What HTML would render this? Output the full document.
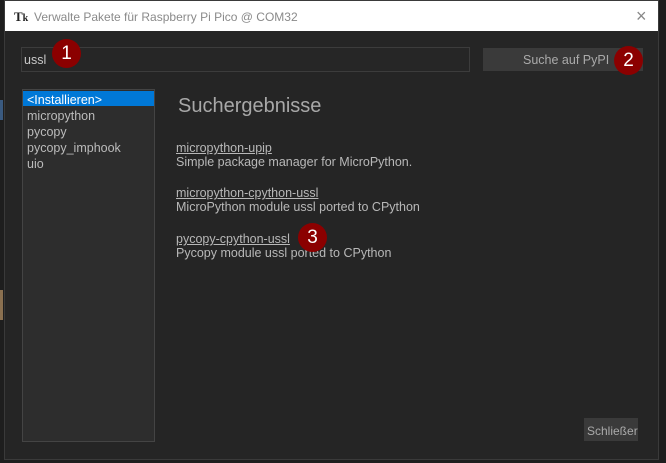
<!DOCTYPE html>
<html><head><meta charset="utf-8"><style>
*{margin:0;padding:0;box-sizing:border-box}
body{width:666px;height:463px;overflow:hidden;background:#1e1e1e;font-family:"Liberation Sans",sans-serif;position:relative}
.a{position:absolute}
#win{left:4px;top:0;width:655px;height:460px;background:#252525;border:1px solid #3a3a3a}
#title{left:5px;top:1px;width:653px;height:30px;background:#fff;color:#8a8a8a;font-size:12px}
.c{width:29px;height:29px;border-radius:50%;background:#8b0000;color:#fff;font-size:19px;text-align:center;line-height:29px}
.t{color:#b8b8b8;font-size:12.5px;white-space:nowrap}
.u{text-decoration:underline}
</style></head><body>
<div class="a" style="left:0;top:100px;width:3px;height:20px;background:#3a5a80"></div>
<div class="a" style="left:0;top:290px;width:3px;height:30px;background:#8a7050"></div>
<div class="a" id="win"></div>
<div class="a" id="title">
 <div class="a" style="left:9px;top:8px;font-weight:bold;font-size:13px;color:#222;font-family:'Liberation Serif',serif">T<span style="font-size:10px">k</span></div>
 <div class="a" style="left:29px;top:9px">Verwalte Pakete für Raspberry Pi Pico @ COM32</div>
 <div class="a" style="left:631px;top:5px;font-size:18px;color:#888">×</div>
</div>
<div class="a" style="left:21px;top:47px;width:449px;height:25px;border:1px solid #3c3c3c;background:#262626"></div>
<div class="a t" style="left:24px;top:53px;color:#c8c8c8;font-size:12.5px">ussl</div>
<div class="a" style="left:483px;top:48px;width:160px;height:23px;background:#3a3a3a"></div>
<div class="a t" style="left:523px;top:53px;color:#aaa;font-size:12.5px">Suche auf PyPI</div>
<div class="a" style="left:22px;top:89px;width:133px;height:353px;background:#2d2d2d;border:1px solid #444"></div>
<div class="a" style="left:23px;top:91px;width:131px;height:15px;background:#0078d7"></div>
<div class="a t" style="left:27px;top:92px;color:#fff;line-height:16px;font-size:12.5px">&lt;Installieren&gt;<br><span style="color:#bbb">micropython<br>pycopy<br>pycopy_imphook<br>uio</span></div>
<div class="a" style="left:178px;top:95px;font-size:20px;color:#a8a8a8">Suchergebnisse</div>
<div class="a t" style="left:176px;top:141px;line-height:14px"><span class="u">micropython-upip</span><br>Simple package manager for MicroPython.</div>
<div class="a t" style="left:176px;top:186px;line-height:14px"><span class="u">micropython-cpython-ussl</span><br>MicroPython module ussl ported to CPython</div>
<div class="a t" style="left:176px;top:232px;line-height:14px"><span class="u">pycopy-cpython-ussl</span><br>Pycopy module ussl ported to CPython</div>
<div class="a" style="left:584px;top:418px;width:54px;height:23px;background:#3a3a3a"></div>
<div class="a t" style="left:587px;top:424px;color:#aaa;font-size:12px">Schließer</div>
<div class="a c" style="left:52px;top:39px">1</div>
<div class="a c" style="left:614px;top:46px">2</div>
<div class="a c" style="left:298px;top:223px">3</div>
</body></html>
